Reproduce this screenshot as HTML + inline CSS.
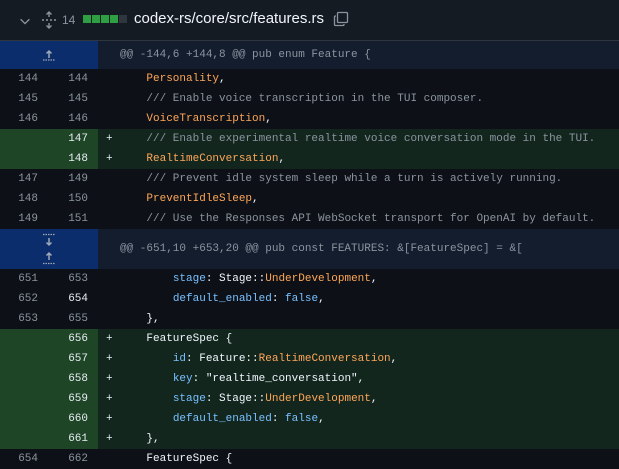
<!DOCTYPE html>
<html><head><style>
*{margin:0;padding:0;box-sizing:border-box}
body{width:619px;height:459px;overflow:hidden;background:#0d1117;font-family:"Liberation Mono",monospace;font-size:11px;color:#f0f6fc}
.hdr{position:absolute;left:0;top:0;width:619px;height:41px;background:#151b23;border-bottom:1px solid #30363d}
.row{position:absolute;left:0;width:619px;height:20px;line-height:20px;white-space:pre}
.n{position:absolute;width:98px;height:100%;left:0;top:0}
.o,.w{position:absolute;text-align:right;width:30px;color:#8b949e}
.o{left:8px}.w{left:58px}
.c{position:absolute;left:120px;top:0}
.p{position:absolute;left:106px;top:0;color:#e6edf3}
.add .n{background:#1f4527}
.add{background:#12261e}
.add .o,.add .w{color:#e6edf3}
.hk{background:#131d2e}
.hk .n{background:#0c2d6b}
.hk .c{color:#8b949e}
.or{color:#ffa657}.bl{color:#79c0ff}.cm{color:#8b949e}
</style></head><body>
<div class="hdr">
<svg style="position:absolute;left:18px;top:14px" width="14" height="14" viewBox="0 0 16 16"><path d="M3 6l5 5 5-5" fill="none" stroke="#8b949e" stroke-width="1.5"/></svg>
<svg style="position:absolute;left:41px;top:11px" width="16" height="18" viewBox="0 0 16 18"><path d="M8 1v5M5.5 3.5L8 1l2.5 2.5M8 17v-5M5.5 14.5L8 17l2.5-2.5" fill="none" stroke="#8b949e" stroke-width="1.4"/><path d="M1 9h2M5 9h2M9 9h2M13 9h2" stroke="#8b949e" stroke-width="1.4"/></svg>
<span style="position:absolute;left:62px;top:13px;font-family:'Liberation Sans',sans-serif;font-size:12px;color:#8b949e">14</span>
<div style="position:absolute;left:83px;top:15px;height:8px;display:flex;gap:1px">
<i style="width:8px;background:#2ea043"></i><i style="width:8px;background:#2ea043"></i><i style="width:8px;background:#2ea043"></i><i style="width:8px;background:#2ea043"></i><i style="width:8px;background:#30363d"></i></div>
<span style="position:absolute;left:134px;top:10px;font-family:'Liberation Sans',sans-serif;font-size:15px;color:#f0f6fc">codex-rs/core/src/features.rs</span>
<svg style="position:absolute;left:333px;top:11px" width="16" height="16" viewBox="0 0 16 16"><path d="M5.5 1.5h8a1 1 0 011 1v8a1 1 0 01-1 1h-8a1 1 0 01-1-1v-8a1 1 0 011-1zM3 5H2.5a1 1 0 00-1 1v7.5a1 1 0 001 1H10a1 1 0 001-1V13" fill="none" stroke="#8b949e" stroke-width="1.3"/></svg>
</div>

<div class="row hk" style="top:41px;height:28px;line-height:28px"><div class="n"><svg style="position:absolute;left:41px;top:7px" width="16" height="14" viewBox="0 0 16 14"><path d="M8 10V3M5.5 5.5L8 3l2.5 2.5" fill="none" stroke="#9fa9b7" stroke-width="1.5"/><path d="M2 12h12" stroke="#9fa9b7" stroke-width="1.2" stroke-dasharray="1.5 1"/></svg></div><span class="c">@@ -144,6 +144,8 @@ pub enum Feature {</span></div>

<div class="row" style="top:69px"><span class="o">144</span><span class="w">144</span><span class="c">    <span class="or">Personality</span>,</span></div>
<div class="row" style="top:89px"><span class="o">145</span><span class="w">145</span><span class="c">    <span class="cm">/// Enable voice transcription in the TUI composer.</span></span></div>
<div class="row" style="top:109px"><span class="o">146</span><span class="w">146</span><span class="c">    <span class="or">VoiceTranscription</span>,</span></div>
<div class="row add" style="top:129px"><div class="n"></div><span class="w">147</span><span class="p">+</span><span class="c">    <span class="cm">/// Enable experimental realtime voice conversation mode in the TUI.</span></span></div>
<div class="row add" style="top:149px"><div class="n"></div><span class="w">148</span><span class="p">+</span><span class="c">    <span class="or">RealtimeConversation</span>,</span></div>
<div class="row" style="top:169px"><span class="o">147</span><span class="w">149</span><span class="c">    <span class="cm">/// Prevent idle system sleep while a turn is actively running.</span></span></div>
<div class="row" style="top:189px"><span class="o">148</span><span class="w">150</span><span class="c">    <span class="or">PreventIdleSleep</span>,</span></div>
<div class="row" style="top:209px"><span class="o">149</span><span class="w">151</span><span class="c">    <span class="cm">/// Use the Responses API WebSocket transport for OpenAI by default.</span></span></div>

<div class="row hk" style="top:229px;height:40px;line-height:40px"><div class="n"><svg style="position:absolute;left:41px;top:4px" width="16" height="32" viewBox="0 0 16 32"><path d="M2 1.5h12M2 30.5h12" stroke="#9fa9b7" stroke-width="1.2" stroke-dasharray="1.5 1"/><path d="M8 5v7M5.5 9.5L8 12l2.5-2.5M8 27v-7M5.5 22.5L8 20l2.5 2.5" fill="none" stroke="#9fa9b7" stroke-width="1.5"/></svg></div><span class="c">@@ -651,10 +653,20 @@ pub const FEATURES: &amp;[FeatureSpec] = &amp;[</span></div>

<div class="row" style="top:269px"><span class="o">651</span><span class="w">653</span><span class="c">        <span class="bl">stage</span>: Stage::<span class="or">UnderDevelopment</span>,</span></div>
<div class="row" style="top:289px"><span class="o">652</span><span class="w" style="color:#e6edf3">654</span><span class="c">        <span class="bl">default_enabled</span>: <span class="bl">false</span>,</span></div>
<div class="row" style="top:309px"><span class="o">653</span><span class="w">655</span><span class="c">    },</span></div>
<div class="row add" style="top:329px"><div class="n"></div><span class="w">656</span><span class="p">+</span><span class="c">    FeatureSpec {</span></div>
<div class="row add" style="top:349px"><div class="n"></div><span class="w">657</span><span class="p">+</span><span class="c">        <span class="bl">id</span>: Feature::<span class="or">RealtimeConversation</span>,</span></div>
<div class="row add" style="top:369px"><div class="n"></div><span class="w">658</span><span class="p">+</span><span class="c">        <span class="bl">key</span>: "realtime_conversation",</span></div>
<div class="row add" style="top:389px"><div class="n"></div><span class="w">659</span><span class="p">+</span><span class="c">        <span class="bl">stage</span>: Stage::<span class="or">UnderDevelopment</span>,</span></div>
<div class="row add" style="top:409px"><div class="n"></div><span class="w">660</span><span class="p">+</span><span class="c">        <span class="bl">default_enabled</span>: <span class="bl">false</span>,</span></div>
<div class="row add" style="top:429px"><div class="n"></div><span class="w">661</span><span class="p">+</span><span class="c">    },</span></div>
<div class="row" style="top:449px"><span class="o">654</span><span class="w">662</span><span class="c">    FeatureSpec {</span></div>
</body></html>
